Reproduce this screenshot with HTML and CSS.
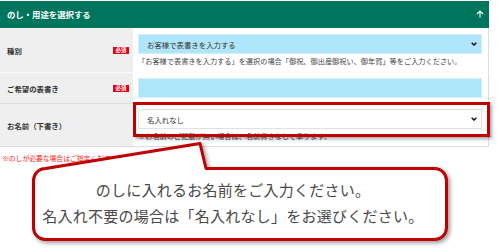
FILE: index.html
```html
<!doctype html>
<html lang="ja">
    <head>
        <meta charset="utf-8">
        <title>のし・用途を選択する</title>
        <meta name="viewport" content="width=device-width, initial-scale=1">
        <link rel="stylesheet" href="styles.css">
    </head>
    <body>
        <div class="panel">
            <div class="panel-head">
                <span>のし・用途を選択する</span>
                <svg class="up" viewBox="0 0 8 8"><path d="M4 7.5V1M1 4l3-3 3 3"/></svg>
            </div>
            <div class="row row-kind">
                <div class="label"><span>種別</span><em class="req">必須</em></div>
                <div class="value">
                    <div class="field select blue">お客様で表書きを入力する
                        <svg class="chev" viewBox="0 0 6 4"><path d="M0.7 0.7l2.3 2.3 2.3-2.3"/></svg>
                    </div>
                    <p class="note">「お客様で表書きを入力する」を選択の場合「御祝、御出産御祝い、御年賀」等をご入力ください。</p>
                </div>
            </div>
            <div class="row row-wish">
                <div class="label"><span>ご希望の表書き</span><em class="req">必須</em></div>
                <div class="value">
                    <div class="field blue"></div>
                </div>
            </div>
            <div class="row row-name">
                <div class="label"><span>お名前（下書き）</span></div>
                <div class="value">
                    <div class="field select">名入れなし
                        <svg class="chev" viewBox="0 0 6 4"><path d="M0.7 0.7l2.3 2.3 2.3-2.3"/></svg>
                    </div>
                    <p class="note">※お名前のご記載が無い場合は、名前書きなしで承ります。</p>
                </div>
            </div>
        </div>
        <p class="warn">※のしが必要な場合はご指定ください。</p>

        <div class="highlight"></div>
        <svg class="bubble" viewBox="0 0 500 252">
            <path d="M33.5 180.5A12 12 0 0 1 45.5 168.5L200 143.5L206 168.5H434.5A12 12 0 0 1 446.5 180.5V227.5A12 12 0 0 1 434.5 239.5H45.5A12 12 0 0 1 33.5 227.5Z"/>
        </svg>
        <div class="bubble-text">
            <p>のしに入れるお名前をご入力ください。</p>
            <p>名入れ不要の場合は「名入れなし」をお選びください。</p>
        </div>
    </body>
</html>
```

FILE: styles.css
```css
body {
	margin: 0;
	font-family: "Noto Sans CJK JP", "Noto Sans", sans-serif;
	color: #333;
	background: #fff;
}

.panel {
	width: 489px;
	margin-top: 1px;
}

.panel-head {
	height: 26px;
	background: #00755d;
	color: #fff;
	font-size: 8.4px;
	font-weight: bold;
	display: flex;
	align-items: center;
	justify-content: space-between;
	padding: 0 5px 0 7px;
	box-sizing: border-box;
}

.panel-head .up {
	width: 8px;
	height: 8px;
	fill: none;
	stroke: #fff;
	stroke-width: 1.1;
}

.row {
	display: grid;
	grid-template-columns: 133px 1fr;
	border-top: 1px solid #f8f8f8;
}
.row-kind { border-top: 1px solid #00755d; height: 44px; }
.row-kind .value { padding-top: 6px; }
.row-wish { height: 30px; border-top: 1px solid #fafafa; }
.row-name { height: 42px; border-top: 1px solid #ddd; border-bottom: 1px solid #ddd; }

.label {
	background: #efefef;
	display: flex;
	align-items: center;
	justify-content: space-between;
	padding: 0 4px 0 7px;
	font-size: 7.4px;
	font-weight: bold;
	color: #333;
}

.req {
	font-style: normal;
	background: #e60012;
	color: #fff;
	font-size: 5.4px;
	line-height: 7px;
	padding: 0 2px;
	width: 12px;
	text-align: center;
}

.value {
	padding: 5px 6px 0 5px;
	border-right: 1px solid #ddd;
}

.field {
	height: 20px;
	box-sizing: border-box;
	border: 1px solid #e2e2e2;
	background: #fff;
	font-size: 7.4px;
	color: #333;
	display: flex;
	align-items: center;
	justify-content: space-between;
	padding: 0 4px 0 8px;
}
.field.blue {
	background: #b0e6fb;
	border-color: #d8eef6;
}

.chev {
	width: 6px;
	height: 4px;
	fill: none;
	stroke: #111;
	stroke-width: 1.5;
}

.note {
	margin: 0;
	font-size: 7.2px;
	line-height: 14px;
	color: #444;
	white-space: nowrap;
}

.warn {
	margin: 6px 0 0 2px;
	font-size: 6.8px;
	color: #ff2020;
}

/* callout overlay */
.highlight {
	position: absolute;
	left: 133px;
	top: 102px;
	width: 357px;
	height: 35px;
	box-sizing: border-box;
	border: 3px solid #c00000;
	box-shadow: 2px 2px 3px rgba(0, 0, 0, .35);
}

.bubble {
	position: absolute;
	left: 0;
	top: 0;
	width: 500px;
	height: 252px;
	filter: drop-shadow(2px 2px 2px rgba(0, 0, 0, .4));
}
.bubble path {
	fill: #fff;
	stroke: #c00000;
	stroke-width: 3;
	stroke-linejoin: round;
}

.bubble-text {
	position: absolute;
	left: 35px;
	top: 177px;
	width: 396px;
	padding-right: 14px;
	text-align: center;
	font-size: 15px;
	letter-spacing: 0.25px;
	line-height: 26px;
	color: #484848;
}
.bubble-text p {
	margin: 0;
}
```
